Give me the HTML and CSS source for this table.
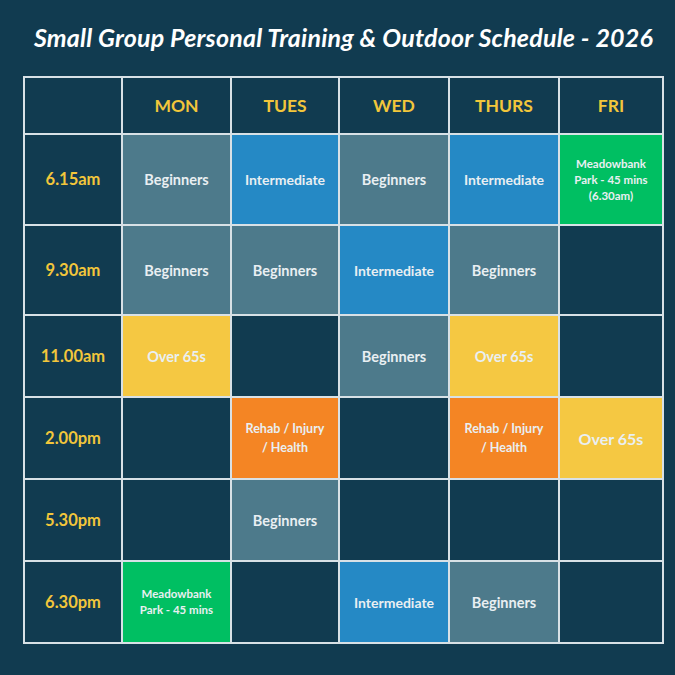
FILE: index.html
```html
<!DOCTYPE html>
<html lang="en">
<head>
<meta charset="utf-8">
<title>Small Group Personal Training &amp; Outdoor Schedule - 2026</title>
<link rel="stylesheet" href="styles.css">
</head>
<body>
<main class="page">
  <h1 class="title">Small Group Personal Training &amp; Outdoor Schedule - 2026</h1>
  <div class="grid">
    <div class="cell head"></div>
    <div class="cell head">MON</div>
    <div class="cell head">TUES</div>
    <div class="cell head">WED</div>
    <div class="cell head">THURS</div>
    <div class="cell head">FRI</div>

    <div class="cell time">6.15am</div>
    <div class="cell beg">Beginners</div>
    <div class="cell int">Intermediate</div>
    <div class="cell beg">Beginners</div>
    <div class="cell int">Intermediate</div>
    <div class="cell park">Meadowbank<br>Park - 45 mins<br>(6.30am)</div>

    <div class="cell time">9.30am</div>
    <div class="cell beg">Beginners</div>
    <div class="cell beg">Beginners</div>
    <div class="cell int">Intermediate</div>
    <div class="cell beg">Beginners</div>
    <div class="cell"></div>

    <div class="cell time">11.00am</div>
    <div class="cell over">Over 65s</div>
    <div class="cell"></div>
    <div class="cell beg">Beginners</div>
    <div class="cell over">Over 65s</div>
    <div class="cell"></div>

    <div class="cell time">2.00pm</div>
    <div class="cell"></div>
    <div class="cell rehab">Rehab / Injury<br>/ Health</div>
    <div class="cell"></div>
    <div class="cell rehab">Rehab / Injury<br>/ Health</div>
    <div class="cell over big">Over 65s</div>

    <div class="cell time">5.30pm</div>
    <div class="cell"></div>
    <div class="cell beg">Beginners</div>
    <div class="cell"></div>
    <div class="cell"></div>
    <div class="cell"></div>

    <div class="cell time">6.30pm</div>
    <div class="cell park">Meadowbank<br>Park - 45 mins</div>
    <div class="cell"></div>
    <div class="cell int">Intermediate</div>
    <div class="cell beg">Beginners</div>
    <div class="cell"></div>
  </div>
</main>
</body>
</html>
```

FILE: styles.css
```css
* { box-sizing: border-box; }
html, body {
  margin: 0;
  padding: 0;
  background: #113b50;
}
.page {
  width: 675px;
  height: 675px;
  padding: 23px 0 0 23px;
  font-family: Lato, "Open Sans", sans-serif;
}
.title {
  margin: 0 0 24px 0;
  width: 641px;
  text-align: center;
  font-size: 25px;
  line-height: 29px;
  font-weight: 700;
  font-style: italic;
  color: #ffffff;
  letter-spacing: 0.2px;
}
.grid {
  display: grid;
  grid-template-columns: 96px 107px 106px 108px 108px 102px;
  grid-template-rows: 55px 89px 88px 80px 80px 80px 80px;
  gap: 2px;
  padding: 2px;
  width: 641px;
  background: #d8e1e6;
}
.cell {
  background: #113b50;
  display: flex;
  align-items: center;
  justify-content: center;
  text-align: center;
  color: #e9eff2;
  font-weight: 700;
  font-size: 14.5px;
  line-height: 19px;
}
.head {
  color: #f2c63b;
  font-size: 17.5px;
  font-weight: 700;
}
.time {
  color: #f2c63b;
  font-size: 16.5px;
}
.beg { background: #4d7a8b; }
.int { background: #2589c5; font-size: 14px; }
.park {
  background: #00bf62;
  font-size: 11.5px;
  line-height: 16px;
  font-weight: 700;
}
.over { background: #f5c842; }
.over.big { font-size: 16px; }
.rehab {
  background: #f48524;
  font-size: 12.5px;
  line-height: 19px;
}
```
